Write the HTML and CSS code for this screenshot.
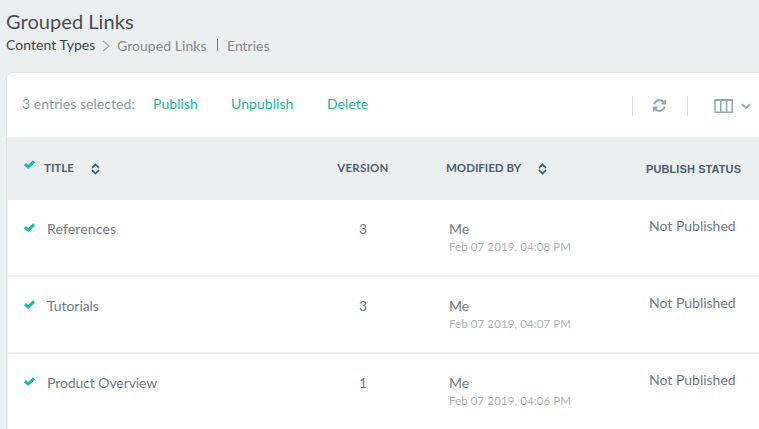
FILE: index.html
```
<!DOCTYPE html>
<html lang="en">
<head>
<meta charset="utf-8">
<title>Grouped Links</title>
<link rel="stylesheet" href="styles.css">
</head>
<body>
<svg class="symbols" aria-hidden="true">
  <symbol id="check" viewBox="0 0 11 9"><path d="M1 4.100 4.200 7 10 1.400" fill="none" stroke="#0dbfa1" stroke-width="2.900"/></symbol>
  <symbol id="sort" viewBox="0 0 9 12"><path d="M1 4.800 4.500 1.400 8 4.800M1 7.200l3.500 3.400L8 7.200" fill="none" stroke="#475e6c" stroke-width="1.800"/></symbol>
</svg>
<header class="page-head">
  <h1>Grouped Links</h1>
  <nav class="crumbs">
    <a class="root">Content Types</a>
    <svg class="sep" width="8" height="12" viewBox="0 0 8 12"><path d="M1 .8 7 6 1 11.2" fill="none" stroke="#999c9d" stroke-width="1.1"/></svg>
    <a class="group">Grouped Links</a>
    <i class="bar"></i>
    <a class="leaf">Entries</a>
  </nav>
</header>
<main class="panel">
  <div class="toolbar">
    <span class="count">3 entries selected:</span>
    <a class="publish">Publish</a>
    <a class="unpublish">Unpublish</a>
    <a class="delete">Delete</a>
    <div class="tools">
      <i class="rule"></i>
      <svg class="refresh" width="13" height="13" viewBox="0 0 1536 1536"><path fill="#98a8b3" d="M1511 928q0 5-1 7-64 268-268 434.500T764 1536q-146 0-282.500-55T238 1324l-129 129q-19 19-45 19t-45-19-19-45V960q0-26 19-45t45-19h448q26 0 45 19t19 45-19 45l-137 137q71 66 161 102t187 36q134 0 250-65t186-179q11-17 53-117 8-23 30-23h192q13 0 22.500 9.500t9.500 22.500zm25-800v448q0 26-19 45t-45 19h-448q-26 0-45-19t-19-45 19-45l138-138Q969 256 768 256q-134 0-250 65T332 500q-11 17-53 117-8 23-30 23H50q-13 0-22.500-9.500T18 608v-7q65-268 270-434.500T768 0q146 0 284 55.500T1297 212l130-129q19-19 45-19t45 19 19 45z"/></svg>
      <i class="rule"></i>
      <svg class="columns" width="20" height="14" viewBox="0 0 20 14"><path d="M1 .8h17.200v12.400H1zM1 1.300h17.200M6.800 1v12M12.600 1v12" fill="none" stroke="#98a8b0" stroke-width="1.600"/></svg>
      <svg class="down" width="10" height="7" viewBox="0 0 10 7"><path d="m1 1.200 4 3.600 4-3.600" fill="none" stroke="#a2adb2" stroke-width="2.200"/></svg>
    </div>
  </div>
  <div class="line head">
    <svg class="tick"><use href="#check"/></svg>
    <div class="title"><span class="h-title">TITLE</span><svg class="sort"><use href="#sort"/></svg></div>
    <div class="version"><span class="h-version">VERSION</span></div>
    <div class="modified"><span class="h-mod">MODIFIED BY</span><svg class="sort"><use href="#sort"/></svg></div>
    <div class="status"><span class="h-status">PUBLISH STATUS</span></div>
  </div>
  <div class="line row">
    <svg class="tick"><use href="#check"/></svg>
    <div class="title">References</div>
    <div class="version">3</div>
    <div class="modified">Me<small>Feb 07 2019, 04:08 PM</small></div>
    <div class="status">Not Published</div>
  </div>
  <div class="line row">
    <svg class="tick"><use href="#check"/></svg>
    <div class="title tutorials">Tutorials</div>
    <div class="version">3</div>
    <div class="modified">Me<small>Feb 07 2019, 04:07 PM</small></div>
    <div class="status">Not Published</div>
  </div>
  <div class="line row">
    <svg class="tick"><use href="#check"/></svg>
    <div class="title overview">Product Overview</div>
    <div class="version">1</div>
    <div class="modified">Me<small>Feb 07 2019, 04:06 PM</small></div>
    <div class="status">Not Published</div>
  </div>
</main>
</body>
</html>
```
FILE: styles.css
```
* { box-sizing: border-box; }
body {
  margin: 0;
  height: 429px;
  overflow: hidden;
  background: #ebeff0;
  font: 14px/20px Lato, sans-serif;
  color: #6f7c85;
  white-space: nowrap;
}
svg { display: block; flex: none; }
.symbols { display: none; }
.page-head { height: 72px; padding: 8px 0 0 6px; }
h1 { margin: 0 0 1px; font-size: 20px; line-height: 26px; font-weight: 400; letter-spacing: .05px; color: #4c4c4c; }
.crumbs { display: flex; align-items: flex-start; color: #85898b; }
.crumbs a { padding-top: 1px; flex: none; }
.crumbs .root { width: 96px; padding-top: 0; color: #3f4243; letter-spacing: .05px; }
.sep { margin-top: 5px; }
.group { margin-left: 7px; width: 100px; letter-spacing: .05px; }
.bar { width: 1px; height: 12px; margin-top: 4px; background: #77797a; }
.leaf { margin-left: 9px; }
.panel { margin-left: 6px; border: 1px solid #e2e5e5; border-width: 1px 0 0 1px; border-radius: 7px 0 0 0; overflow: hidden; }
.toolbar { height: 64px; display: flex; align-items: center; padding-left: 15px; background: #fff; color: #8c9bab; }
.toolbar > a, .count { flex: none; padding-bottom: 2px; letter-spacing: .06px; }
.toolbar > a { color: #13b99c; }
.count { width: 131px; }
.publish { width: 78px; }
.unpublish { width: 96px; }
.tools { margin-left: auto; width: 127px; display: flex; align-items: center; flex: none; padding-top: 1px; }
.rule { width: 1px; height: 20px; background: #d9dcde; }
.refresh { margin: 0 21px 0 20px; }
.columns { margin: 0 7px 0 26px; }
.down { margin-top: 2px; }
.line { display: grid; }
.tick { width: 11px; height: 9px; }
.head { height: 63px; padding: 22px 0 0 17px; grid-template-columns: 20px 274px 90px 200px 1fr; align-items: start; font-weight: 700; font-size: 11.5px; color: #4a606e; }
.head > div { height: 20px; display: flex; align-items: center; margin-top: -1px; }
.head .tick { margin-top: 1px; }
.sort { width: 9px; height: 12px; margin: 2px 0 0 17px; }
.head .version { justify-content: center; letter-spacing: .2px; }
.head .modified { padding-left: 38px; }
.head .status { padding-left: 38px; padding-top: 1px; font: 700 11px/20px "Liberation Sans", Arial, sans-serif; letter-spacing: .1px; }
.row { height: 77px; margin-left: 1px; padding: 19px 0 0 16px; border-bottom: 2px solid #ebeff0; background: #fff; grid-template-columns: 23px 271px 90px 200px 1fr; }
.row .tick { margin-top: 4px; }
.row .title { letter-spacing: .15px; }
.row .tutorials { letter-spacing: -.05px; }
.row .overview { letter-spacing: -.08px; }
.row .version { text-align: center; }
.row .modified { padding-left: 41px; }
.row .status { padding-left: 41px; margin-top: -3px; }
small { display: block; margin-top: 1px; font-size: 11.500px; line-height: 14px; letter-spacing: .09px; color: #b0b3b5; }
```
